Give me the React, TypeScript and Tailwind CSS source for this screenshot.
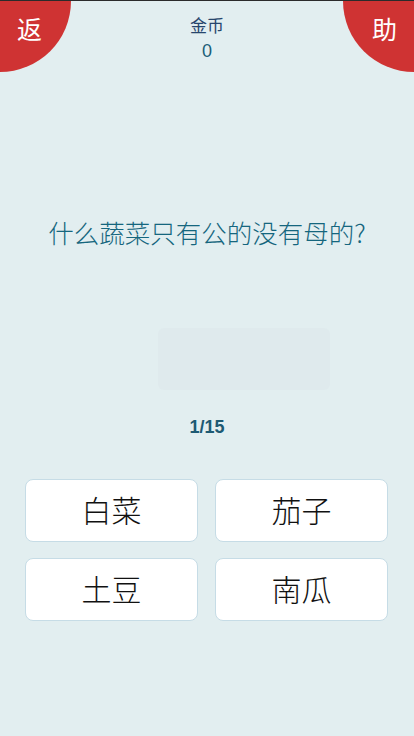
import React from "react";

const cjk = '"Noto Sans CJK SC", "Noto Sans", sans-serif';
const latin = '"Liberation Sans", Arial, sans-serif';

export default function App() {
  const options = ["白菜", "茄子", "土豆", "南瓜"];
  return (
    <div
      className="relative min-h-[736px] overflow-hidden border-t border-[#2b2b2b] bg-[#e2eef0]"
      style={{ fontFamily: cjk }}
    >
      {/* corner buttons */}
      <div className="absolute -left-[71px] -top-[71px] h-[142px] w-[142px] rounded-full bg-[#cf3333]" />
      <div className="absolute left-[17px] top-[15px] text-[25px] leading-none text-white">返</div>
      <div className="absolute -right-[71px] -top-[71px] h-[142px] w-[142px] rounded-full bg-[#cf3333]" />
      <div className="absolute right-[17px] top-[15px] text-[25px] leading-none text-white">助</div>

      <div className="flex flex-col items-center pt-[15px]">
        <div className="text-[17px] leading-none text-[#27466d]">金币</div>
        <div
          className="mt-[9px] text-[18px] leading-none text-[#1b5e78]"
          style={{ fontFamily: latin }}
        >
          0
        </div>

        <div className="mt-[159px] h-[26px] text-[25.5px] font-light leading-none text-[#15667e]">
          什么蔬菜只有公的没有母的?
        </div>

        <div className="mt-[83px] ml-[158px] h-[62px] w-[172px] self-start rounded-md bg-[#dfeaed]" />

        <div
          className="mt-[28px] h-[18px] text-[18px] font-bold leading-none text-[#1d5a73]"
          style={{ fontFamily: latin }}
        >
          1/15
        </div>

        <div className="mt-[43px] grid w-full grid-cols-2 gap-x-[17px] gap-y-[16px] pl-[25px] pr-[26px]">
          {options.map((o) => (
            <div
              key={o}
              className="flex h-[63px] items-center justify-center rounded-lg border border-[#c6dce6] bg-white pb-[3px] text-[30px] font-light leading-none text-[#111]"
            >
              {o}
            </div>
          ))}
        </div>
      </div>
    </div>
  );
}
